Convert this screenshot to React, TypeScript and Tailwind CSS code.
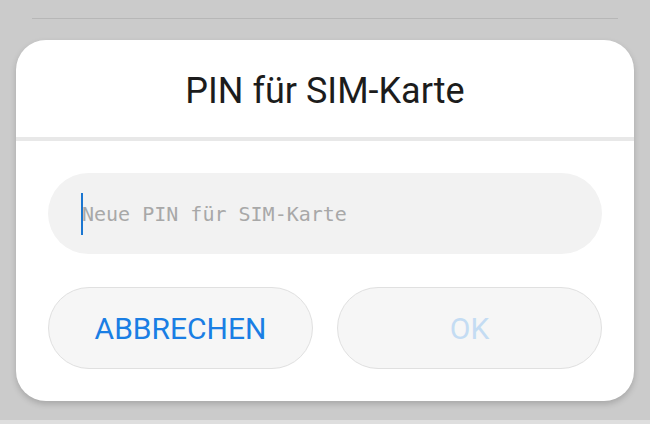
export default function App() {
  return (
    <main className="h-[424px] w-[650px] overflow-hidden bg-[#cbcbcb] flex flex-col" style={{ fontFamily: 'Roboto, "Noto Sans", sans-serif' }}>
      <div className="h-[18px]" />
      <div className="mx-8 h-px bg-[#b7b7b7]" />
      <div className="h-[21px]" />

      <section className="mx-4 rounded-[30px] bg-white shadow-[0_3px_6px_rgba(0,0,0,0.18)] flex flex-col">
        <div className="h-[97px] flex items-center justify-center">
          <h1 className="text-[36px] leading-none text-[#1c1c1c] pt-1">PIN für SIM-Karte</h1>
        </div>
        <div className="h-1 bg-[#e8e8e8]" />

        <div className="px-8 pt-8 pb-8 flex flex-col gap-[33px]">
          <div className="h-[81px] rounded-full bg-[#f2f2f2] flex items-center pl-[33px]">
            <span className="w-[2px] h-[42px] bg-[#1b76d1]" />
            <span className="text-[20px] text-[#a8a8a8] -ml-[1px]" style={{ fontFamily: '"DejaVu Sans Mono", monospace' }}>
              Neue PIN für SIM-Karte
            </span>
          </div>

          <div className="flex gap-6">
            <button className="flex-1 h-[82px] rounded-full border border-[#e0e0e0] bg-[#f6f6f6] text-[30px] text-[#1a7ee4]">
              ABBRECHEN
            </button>
            <button className="flex-1 h-[82px] rounded-full border border-[#e0e0e0] bg-[#f6f6f6] text-[30px] text-[#c4dcf3]">
              OK
            </button>
          </div>
        </div>
      </section>

      <div className="flex-1" />
      <div className="h-1 bg-[#dedede]" />
    </main>
  );
}
